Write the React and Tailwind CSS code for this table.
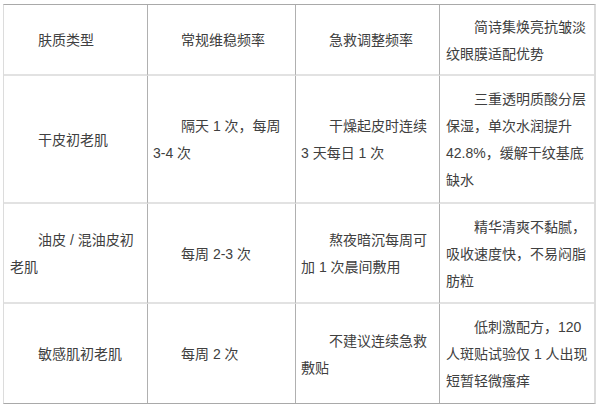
import React from "react";

const rows = [
  {
    h: "h-[71px]",
    cells: [["肤质类型"], ["常规维稳频率"], ["急救调整频率"], ["简诗集焕亮抗皱淡", "纹眼膜适配优势"]],
  },
  {
    h: "h-[128px]",
    cells: [
      ["干皮初老肌"],
      ["隔天 1 次，每周", "3-4 次"],
      ["干燥起皮时连续", "3 天每日 1 次"],
      ["三重透明质酸分层", "保湿，单次水润提升", "42.8%，缓解干纹基底", "缺水"],
    ],
  },
  {
    h: "h-[100px]",
    cells: [
      ["油皮 / 混油皮初", "老肌"],
      ["每周 2-3 次"],
      ["熬夜暗沉每周可", "加 1 次晨间敷用"],
      ["精华清爽不黏腻，", "吸收速度快，不易闷脂", "肪粒"],
    ],
  },
  {
    h: "h-[99px]",
    cells: [
      ["敏感肌初老肌"],
      ["每周 2 次"],
      ["不建议连续急救", "敷贴"],
      ["低刺激配方，120", "人斑贴试验仅 1 人出现", "短暂轻微瘙痒"],
    ],
  },
];

const colPad = ["pl-[6px]", "pl-[5px]", "pl-[5px]", "pl-[6px]"];

export default function App() {
  return (
    <div className="h-[413px] w-[600px] bg-white pl-[3px] pt-[4px] text-[14px] leading-[27px] text-[#404040] [font-family:'Liberation_Sans','Noto_Sans_CJK_SC',sans-serif]">
      <div className="grid w-[593px] grid-cols-[144px_148px_144px_154px] border-t border-b border-l border-r-2 border-t-[#a9a9a9] border-b-[#a9a9a9] border-l-[#dcdcdc] border-r-[#dcdcdc]">
        {rows.map((row, ri) =>
          row.cells.map((lines, ci) => (
            <div
              key={`${ri}-${ci}`}
              className={`flex flex-col justify-center pt-[2px] ${row.h} ${colPad[ci]} ${
                ci < 3 ? "border-r border-r-[#b0b0b0]" : ""
              } ${ri < rows.length - 1 ? "border-b-2 border-b-[#e2e2e2]" : ""}`}
            >
              {lines.map((line, li) => (
                <div key={li} className={`whitespace-nowrap ${li === 0 ? "pl-[28px]" : ""}`}>
                  {line}
                </div>
              ))}
            </div>
          ))
        )}
      </div>
    </div>
  );
}
